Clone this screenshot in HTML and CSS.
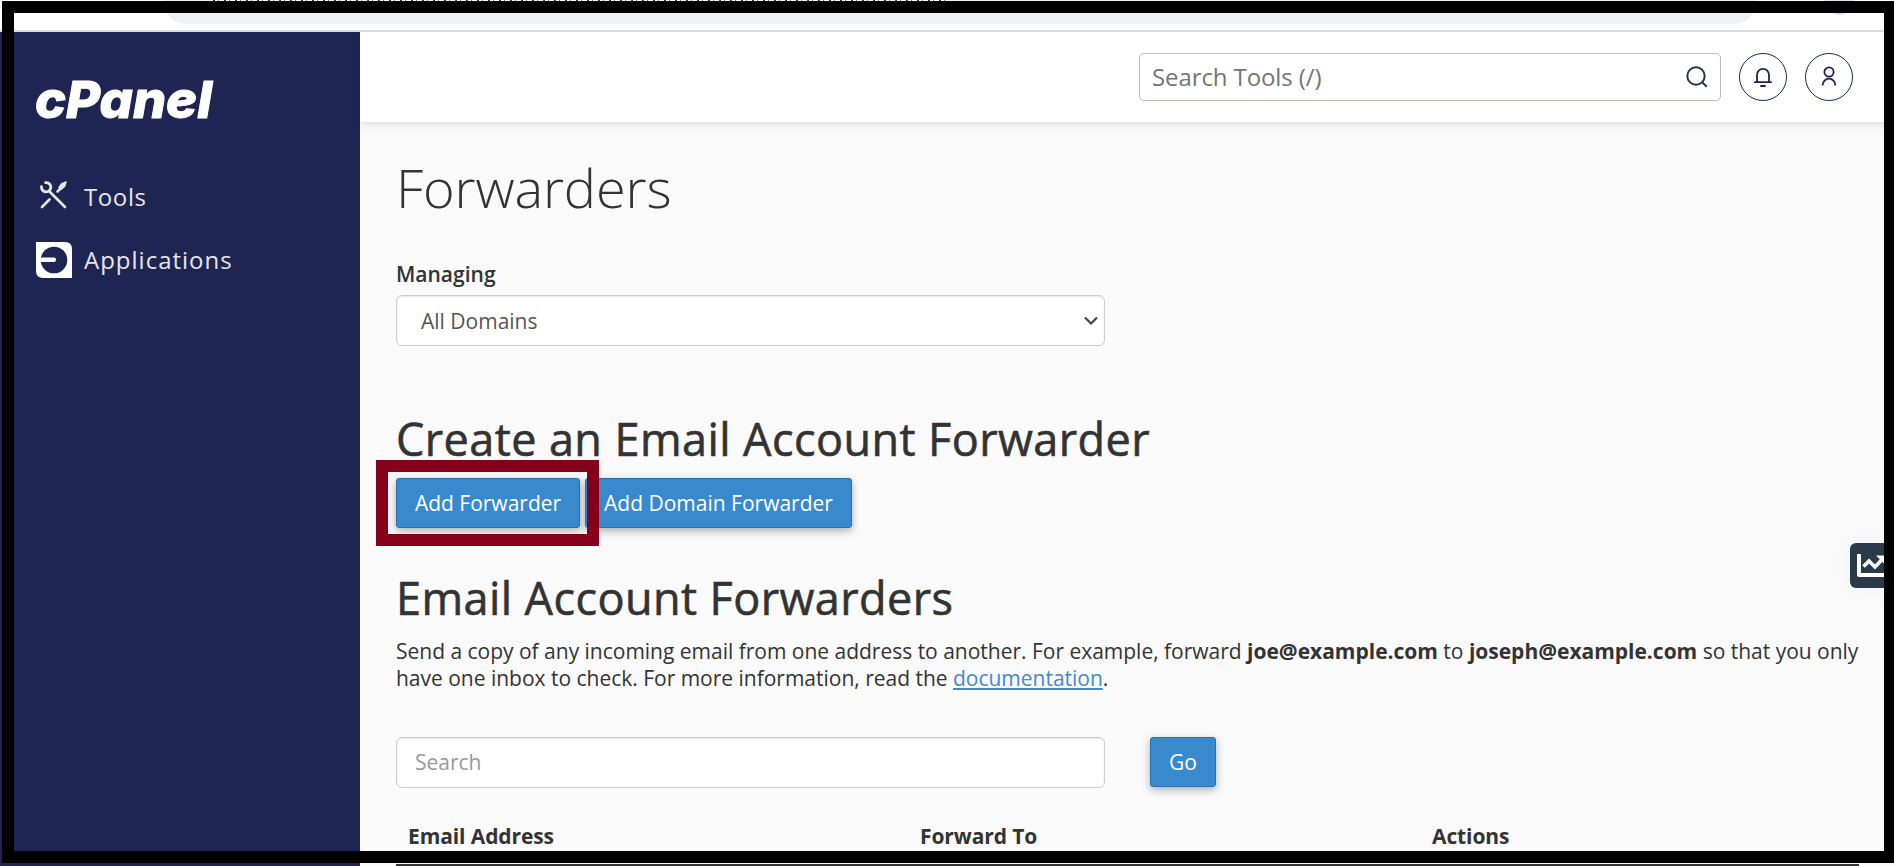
FILE: index.html
```html
<!DOCTYPE html>
<html lang="en">
<head>
	<meta charset="utf-8">
	<title>cPanel - Forwarders</title>
	<link rel="stylesheet" href="styles.css">
</head>
<body>
	<div class="browser">
		<div class="tabtext"></div>
		<div class="addressbar"></div>
		<div class="avatar"></div>
	</div>
	<div class="page">
		<div class="sidebar">
			<svg class="logo" width="180" height="44" viewBox="0 0 180 44">
				<text x="-1" y="40.500" textLength="177" lengthAdjust="spacingAndGlyphs">cPanel</text>
			</svg>
			<a class="navlink tools">
				<svg width="36" height="36" viewBox="0 0 36 36" fill="none" stroke="#e6e6e6" stroke-width="2.6" stroke-linecap="round">
					<path d="M14 15L29 30M6 30l7.500-7.500"/>
					<path d="M9.500 5.600a4.700 4.700 0 1 1-4 4" stroke-width="2.800"/>
					<path d="M21.500 14.500l2.500-2.500"/>
					<path d="M23 10.500l2.500-3.500 4.500-2-1.500 4.500-3.500 2.800z" fill="#e6e6e6" stroke-width="1.500" stroke-linejoin="round"/>
				</svg>
				<span>Tools</span>
			</a>
			<a class="navlink apps">
				<svg width="36" height="36" viewBox="0 0 36 36">
					<path d="M0 0h29q7 0 7 7v29H7q-7 0-7-7z" fill="#fff"/>
					<circle cx="18" cy="18" r="13.300" fill="#1f2553"/>
					<path d="M3 15.500h14.800a2.300 2.300 0 0 1 0 4.600H3z" fill="#fff"/>
				</svg>
				<span>Applications</span>
			</a>
		</div>
		<div class="content">
			<div class="topbar">
				<div class="toolsearch">
					<span>Search Tools (/)</span>
					<svg width="24" height="24" viewBox="0 0 24 24" fill="none" stroke="#243746" stroke-width="2">
						<circle cx="11" cy="11" r="8.700"/>
						<path d="M17.200 17.200l4.600 4.600"/>
					</svg>
				</div>
				<div class="roundbtn">
					<svg width="24" height="24" viewBox="0 0 24 24" fill="none" stroke="#1f2553" stroke-width="1.800">
						<path d="M3.200 17.200h17.600M6 17V9.800a6 6 0 0 1 12 0V17M9.300 21h5.400"/>
					</svg>
				</div>
				<div class="roundbtn">
					<svg width="24" height="24" viewBox="0 0 24 24" fill="none" stroke="#1f2553" stroke-width="1.800">
						<circle cx="12" cy="7" r="4.600"/>
						<path d="M5.700 20.500v-.500a6.300 6.300 0 0 1 12.600 0v.500"/>
					</svg>
				</div>
			</div>
			<div class="main">
				<h1>Forwarders</h1>
				<div class="label">Managing</div>
				<div class="field select">
					<span>All Domains</span>
					<svg width="14" height="10" viewBox="0 0 14 10" fill="none" stroke="#444" stroke-width="2.200">
						<path d="M1 1.500l6 6 6-6"/>
					</svg>
				</div>
				<h2 class="create">Create an Email Account Forwarder</h2>
				<div class="buttons">
					<a class="btn add">Add Forwarder</a>
					<a class="btn domain">Add Domain Forwarder</a>
					<div class="highlight"></div>
				</div>
				<h2>Email Account Forwarders</h2>
				<p>Send a copy of any incoming email from one address to another. For example, forward <b>joe@example.com</b> to <b>joseph@example.com</b> so that you only<br>have one inbox to check. For more information, read the <a class="doclink">documentation</a>.</p>
				<div class="searchrow">
					<div class="field">Search</div>
					<a class="btn go">Go</a>
				</div>
				<div class="tablehead">
					<div>Email Address</div>
					<div>Forward To</div>
					<div>Actions</div>
				</div>
			</div>
		</div>
	</div>
	<div class="statstab">
		<svg width="34" height="26" viewBox="0 0 34 26" fill="none" stroke="#fff">
			<path d="M2 1v21h30" stroke-width="4" stroke-linejoin="round"/>
			<path d="M6.500 13.500l5.500-5.500 6 6 8-8.500" stroke-width="3.600"/>
			<path d="M19 2.500h10v10z" fill="#fff" stroke="none"/>
		</svg>
	</div>
	<div class="frame"></div>
</body>
</html>
```

FILE: styles.css
```css
* {
	box-sizing: border-box;
}
body {
	margin: 0;
	width: 1894px;
	height: 866px;
	overflow: hidden;
	position: relative;
	background: #fafafa;
	color: #333;
	font-family: "Open Sans", "Noto Sans", sans-serif;
	font-size: 21px;
	line-height: 27px;
}
h1, h2, p {
	margin: 0;
}
.browser {
	position: relative;
	height: 32px;
	background: #fff;
	border-bottom: 2px solid #dcdcdc;
	overflow: hidden;
}
.addressbar {
	width: 1594px;
	height: 46px;
	margin: -23px 0 0 163px;
	border-radius: 23px;
	background: #f1f2f3;
}
.tabtext {
	position: relative;
	z-index: 1;
	width: 732px;
	height: 1px;
	margin-left: 213px;
	background: repeating-linear-gradient(90deg, #333 0 2px, #fff 2px 5px, #777 5px 6px, #fff 6px 11px);
}
.avatar {
	position: absolute;
	left: 1825px;
	top: -14px;
	width: 29px;
	height: 29px;
	border-radius: 50%;
	background: #dfe3ea;
}
.page {
	display: flex;
	height: 834px;
}
.sidebar {
	width: 360px;
	padding: 45px 36px;
	background: #1f2553;
}
.logo {
	display: block;
	margin-bottom: 56px;
	overflow: visible;
}
.logo text {
	font-family: Inter, sans-serif;
	font-size: 51px;
	font-weight: 800;
	font-style: italic;
	fill: #fff;
	stroke: #fff;
	stroke-width: 1px;
	stroke-linejoin: round;
}
.navlink {
	display: flex;
	align-items: center;
	gap: 12px;
	height: 36px;
	margin-bottom: 29px;
	color: #e6e6e6;
	font-size: 24px;
	letter-spacing: 1px;
}
.tools span {
	padding-top: 2px;
	letter-spacing: 0.6px;
}
.apps span {
	padding-bottom: 2px;
}
.content {
	flex: 1;
}
.topbar {
	display: flex;
	justify-content: flex-end;
	align-items: center;
	gap: 18px;
	height: 90px;
	padding-right: 41px;
	background: #fff;
	box-shadow: 0 2px 8px rgba(0, 0, 0, 0.13);
}
.toolsearch {
	display: flex;
	justify-content: space-between;
	align-items: center;
	width: 582px;
	height: 48px;
	padding: 0 11px 0 12px;
	border: 1px solid #b9bace;
	border-radius: 5px;
	background: #fff;
	color: #757575;
	font-size: 24px;
	letter-spacing: -0.1px;
}
.toolsearch span {
	padding-bottom: 2px;
}
.roundbtn {
	display: flex;
	justify-content: center;
	align-items: center;
	width: 48px;
	height: 48px;
	border: 1px solid #1f2553;
	border-radius: 50%;
}
.main {
	padding: 35px 0 0 36px;
}
h1 {
	margin-bottom: 44px;
	font-size: 54px;
	font-weight: 300;
	letter-spacing: -0.1px;
	line-height: 60px;
}
h2 {
	font-size: 45px;
	font-weight: 500;
	letter-spacing: 0.42px;
	line-height: 50px;
	-webkit-text-stroke: 0.6px #333;
}
.label {
	margin-bottom: 7px;
	font-weight: 600;
}
.field {
	display: flex;
	align-items: center;
	width: 709px;
	height: 51px;
	padding: 0 18px;
	border: 1px solid #ccc;
	border-radius: 6px;
	background: #fff;
	box-shadow: inset 0 1px 2px rgba(0, 0, 0, 0.1);
	color: #999;
}
.select {
	justify-content: space-between;
	padding: 0 6px 0 24px;
	color: #555;
}
.select span {
	padding-top: 2px;
}
.create {
	margin-top: 68px;
}
.buttons {
	position: relative;
	display: flex;
	gap: 5px;
	margin: 14px 0 45px;
}
.btn {
	height: 50px;
	border: 1px solid #2a6fae;
	border-radius: 3px;
	background: #3989cf;
	box-shadow: 0 3px 8px rgba(0, 0, 0, 0.3);
	color: #fff;
	line-height: 48px;
	text-align: center;
	white-space: nowrap;
}
.add {
	width: 184px;
}
.domain {
	width: 267px;
}
.go {
	width: 66px;
}
.highlight {
	position: absolute;
	left: -20px;
	top: -18px;
	width: 223px;
	height: 86px;
	border: 12px solid #85001b;
}
p {
	margin-top: 15px;
	letter-spacing: -0.012px;
	white-space: nowrap;
}
.doclink {
	color: #428bca;
	text-decoration: underline;
	text-decoration-thickness: 2px;
	text-underline-offset: 2px;
	text-decoration-skip-ink: none;
}
.searchrow {
	display: flex;
	gap: 45px;
	margin-top: 45px;
}
.tablehead {
	display: grid;
	grid-template-columns: 512px 512px 439px;
	width: 1463px;
	margin-top: 22px;
	padding: 13px 0 14px;
	border-bottom: 2px solid #333;
	font-weight: 700;
	letter-spacing: -0.1px;
}
.tablehead div {
	padding-left: 12px;
}
.statstab {
	position: absolute;
	left: 1850px;
	top: 543px;
	width: 44px;
	height: 45px;
	padding: 10px 0 0 7px;
	border-radius: 6px 0 0 6px;
	background: #293b4a;
	box-shadow: 0 0 30px rgba(0, 0, 0, 0.04);
}
.frame {
	position: absolute;
	left: 2px;
	top: 1px;
	width: 1894px;
	height: 862px;
	border: 12px solid #000;
}
```
